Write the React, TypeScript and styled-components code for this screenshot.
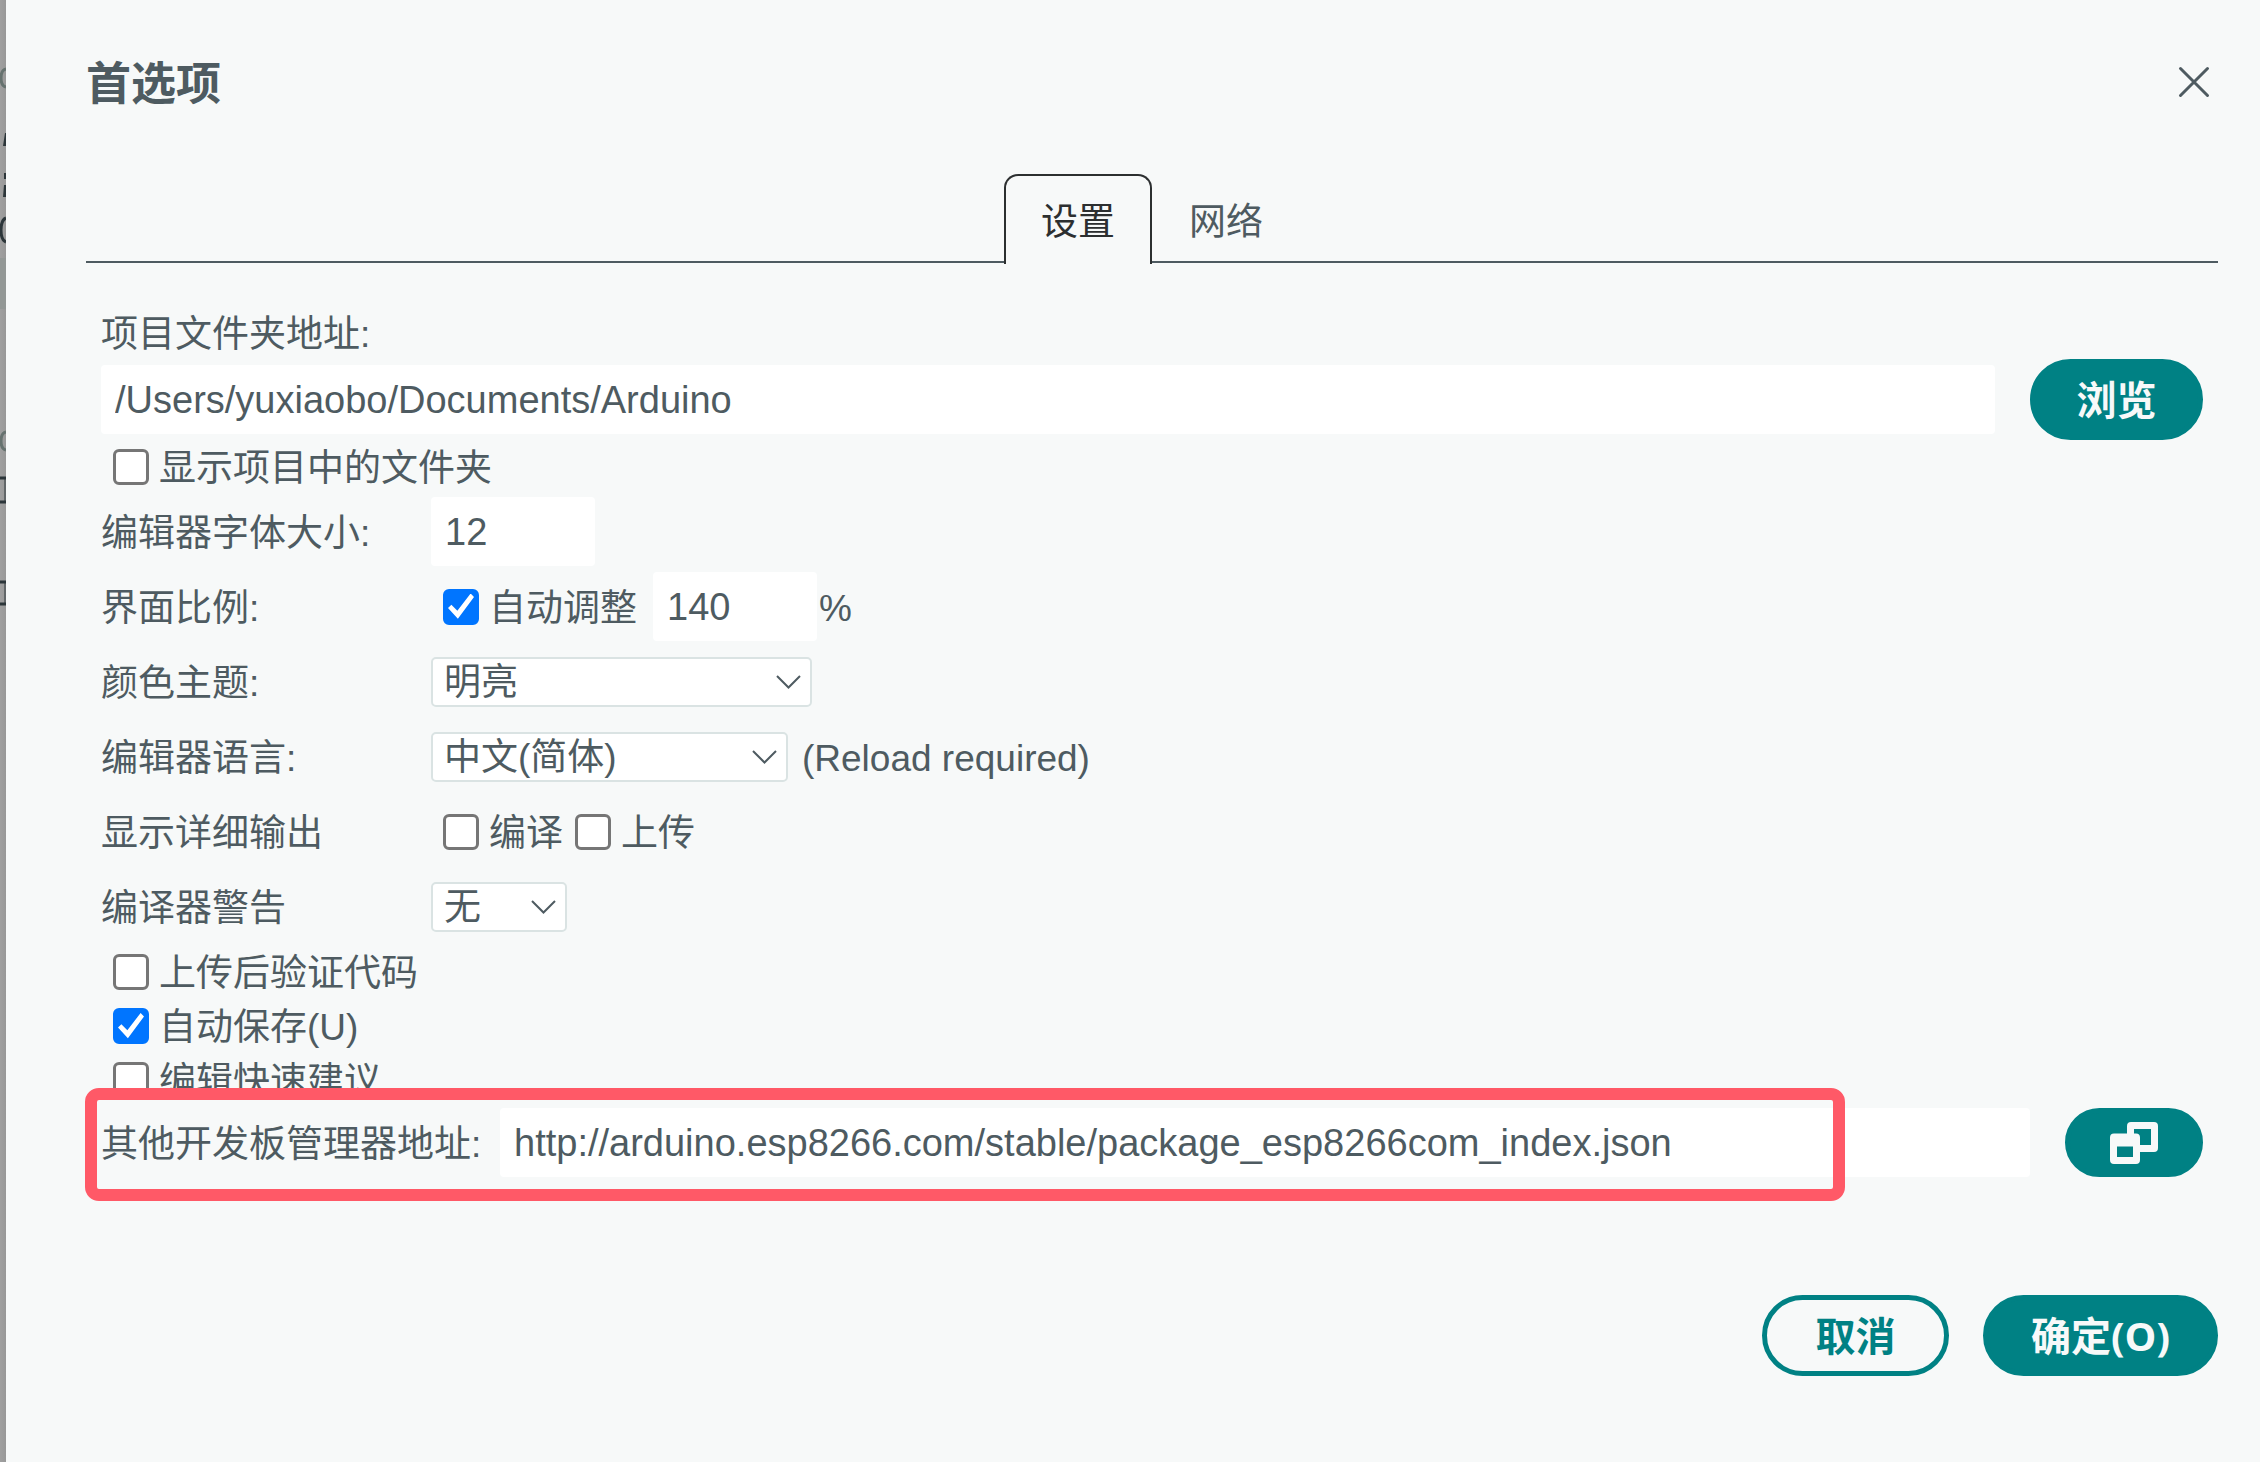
import React, { useState } from "react";
import styled, { createGlobalStyle } from "styled-components";

const ink = "#4e5b61";
const paper = "#f7f9f9";
const teal = "#008184";

const GlobalStyle = createGlobalStyle`
  *, *::before, *::after { box-sizing: border-box; }
  body {
    margin: 0;
    background: #9b9b9b;
    color: ${ink};
    font-family: "Liberation Sans", "Noto Sans CJK SC", sans-serif;
    font-size: 37px;
    line-height: 54px;
  }
  button, input, select { font: inherit; color: inherit; margin: 0; }
`;

const Page = styled.div`
  display: flex;
  min-height: 100vh;
`;

const Backdrop = styled.div`
  flex: none;
  width: 6px;
  overflow: hidden;
  background: linear-gradient(to right, #a0a0a0, #989898);
`;

const BackdropMarks = styled.svg`
  display: block;
`;

const Dialog = styled.main`
  flex: 1;
  min-width: 0;
  display: flex;
  flex-direction: column;
  padding: 48px 42px 86px 80px;
  background: ${paper};
`;

const Header = styled.header`
  display: flex;
  justify-content: space-between;
  align-items: center;
  height: 68px;
`;

const Title = styled.h1`
  margin: 0;
  padding-top: 6px;
  font-size: 45px;
  line-height: 68px;
  font-weight: 700;
`;

const CloseButton = styled.button`
  display: flex;
  padding: 8px;
  border: 0;
  background: none;
`;

const Tabs = styled.div`
  display: flex;
  justify-content: center;
  height: 90px;
  margin-top: 58px;
  background: linear-gradient(${ink}, ${ink}) 0 87px / 100% 2px no-repeat;
`;

const Tab = styled.button<{ $active: boolean }>`
  width: 148px;
  padding: 6px 0 0;
  border: 2px solid ${(p) => (p.$active ? "#2c2f30" : "transparent")};
  border-bottom: 0;
  border-radius: 14px 14px 0 0;
  background: ${(p) => (p.$active ? paper : "none")};
  color: ${(p) => (p.$active ? "#2c2f30" : ink)};
`;

const Content = styled.div`
  padding: 41px 15px 0;
`;

const Field = styled.div`
  display: flex;
  align-items: center;
  gap: 35px;
`;

const BlockLabel = styled.label`
  display: block;
  height: 54px;
  padding-top: 3px;
`;

const RowLabel = styled.label`
  padding-top: 4px;
`;

const TextInput = styled.input<{ $width?: number }>`
  ${(p) => (p.$width ? `flex: none; width: ${p.$width}px;` : "flex: 1; min-width: 0;")}
  height: 69px;
  padding: 2px 14px 0;
  border: 0;
  border-radius: 4px;
  background: #fff;
  font-size: 38px;
`;

const PillButton = styled.button<{ $outline?: boolean; $width: number; $height?: number }>`
  flex: none;
  display: flex;
  justify-content: center;
  align-items: center;
  width: ${(p) => p.$width}px;
  height: ${(p) => p.$height ?? 81}px;
  padding: 0;
  border: 5px solid ${teal};
  border-radius: 41px;
  background: ${(p) => (p.$outline ? "transparent" : teal)};
  color: ${(p) => (p.$outline ? teal : paper)};
  font-family: "Open Sans", "Noto Sans CJK SC", sans-serif;
  font-size: 40px;
  font-weight: 700;
  line-height: 52px;
`;

const CheckLabel = styled.label`
  display: flex;
  align-items: center;
  gap: 10px;
  height: 54px;
`;

const CheckText = styled.span`
  padding-top: 4px;
`;

const CheckBox = styled.input`
  appearance: none;
  flex: none;
  display: grid;
  place-items: center;
  width: 36px;
  height: 36px;
  border: 3px solid #767676;
  border-radius: 6px;
  background: #fff;

  &:checked {
    border-color: #0075ff;
    background: #0075ff;
  }

  &:checked::before {
    content: "";
    width: 26px;
    height: 26px;
    background: #fff;
    clip-path: polygon(0 56%, 13% 43%, 36% 66%, 87% 0, 100% 13%, 38% 97%);
  }
`;

const CheckList = styled.div`
  display: grid;
  padding: 4px 0 1px 12px;
`;

const Rows = styled.div`
  display: grid;
  grid-template-columns: 330px 1fr;
  grid-auto-rows: 69px;
  row-gap: 6px;
  align-items: center;
  margin-top: 3px;
`;

const Controls = styled.div<{ $gap: number; $inset?: boolean }>`
  display: flex;
  align-items: center;
  gap: ${(p) => p.$gap}px;
  padding-left: ${(p) => (p.$inset ? 12 : 0)}px;
`;

const SelectBox = styled.div<{ $width: number }>`
  position: relative;
  width: ${(p) => p.$width}px;
`;

const Select = styled.select`
  appearance: none;
  display: block;
  width: 100%;
  height: 50px;
  padding: 2px 11px 0;
  border: 2px solid #dae3e3;
  border-radius: 5px;
  background: #fff;
  line-height: 44px;
`;

const Chevron = styled.svg`
  position: absolute;
  right: 11px;
  top: 18px;
  pointer-events: none;
`;

const BoardUrls = styled.section`
  position: relative;
  margin: 0 15px;
`;

const UrlField = styled.div`
  display: flex;
  align-items: center;
`;

const UrlLabel = styled(RowLabel)`
  flex: none;
  width: 399px;
  white-space: nowrap;
`;

const UrlButton = styled(PillButton)`
  margin-left: 35px;
`;

const Highlight = styled.div`
  position: absolute;
  left: -16px;
  right: 358px;
  top: -20px;
  height: 113px;
  border: 12px solid #ff5967;
  border-radius: 14px;
  pointer-events: none;
`;

const Footer = styled.footer`
  display: flex;
  justify-content: flex-end;
  gap: 34px;
  margin-top: auto;
`;

function Check({ label, on = false }: { label: string; on?: boolean }) {
  return (
    <CheckLabel>
      <CheckBox type="checkbox" defaultChecked={on} />
      <CheckText>{label}</CheckText>
    </CheckLabel>
  );
}

function Dropdown({ id, width, options }: { id: string; width: number; options: string[] }) {
  return (
    <SelectBox $width={width}>
      <Select id={id}>
        {options.map((o) => (
          <option key={o}>{o}</option>
        ))}
      </Select>
      <Chevron width="25" height="14" viewBox="0 0 25 14" fill="none" stroke={ink} strokeWidth="2">
        <path d="M1 1 12.500 12.500 24 1" />
      </Chevron>
    </SelectBox>
  );
}

export default function App() {
  const [tab, setTab] = useState("设置");
  return (
    <Page>
      <GlobalStyle />
      <Backdrop>
        <BackdropMarks width="6" height="660" viewBox="0 0 6 660" fill="none" stroke="#2c363a" strokeWidth="3">
          <rect y="258" width="6" height="51" fill="#939896" stroke="none" />
          <path d="M6 69Q1 70 1 78T6 87M6 432Q1 433 1 441T6 450" stroke="#66726f" />
          <path d="M6 133V146H3L5 133ZM4 173H6V179H4ZM4 185H6V197H3Z" fill="#2c363a" stroke="none" />
          <path d="M6 218Q1 220 1 230T6 242" />
          <path d="M0 478H6M0 502H6M0 582H6M0 604H6" />
          <path d="M5 478V502M5 582V604" strokeWidth="1" />
        </BackdropMarks>
      </Backdrop>
      <Dialog>
        <Header>
          <Title>首选项</Title>
          <CloseButton aria-label="关闭">
            <svg width="32" height="32" viewBox="0 0 32 32" stroke={ink} strokeWidth="3" strokeLinecap="round">
              <path d="M2.500 2.500 29.500 29.500M29.500 2.500 2.500 29.500" />
            </svg>
          </CloseButton>
        </Header>
        <Tabs role="tablist">
          {["设置", "网络"].map((t) => (
            <Tab key={t} role="tab" aria-selected={tab === t} $active={tab === t} onClick={() => setTab(t)}>
              {t}
            </Tab>
          ))}
        </Tabs>
        <Content>
          <BlockLabel htmlFor="folder">项目文件夹地址:</BlockLabel>
          <Field>
            <TextInput id="folder" defaultValue="/Users/yuxiaobo/Documents/Arduino" />
            <PillButton $width={173}>浏览</PillButton>
          </Field>
          <Controls $gap={0} $inset>
            <Check label="显示项目中的文件夹" />
          </Controls>
          <Rows>
            <RowLabel htmlFor="font-size">编辑器字体大小:</RowLabel>
            <TextInput id="font-size" $width={164} defaultValue="12" />
            <RowLabel htmlFor="scale">界面比例:</RowLabel>
            <Controls $gap={16} $inset>
              <Check label="自动调整" on />
              <Controls $gap={2}>
                <TextInput id="scale" $width={164} defaultValue="140" />
                <CheckText>%</CheckText>
              </Controls>
            </Controls>
            <RowLabel htmlFor="theme">颜色主题:</RowLabel>
            <Dropdown id="theme" width={381} options={["明亮"]} />
            <RowLabel htmlFor="language">编辑器语言:</RowLabel>
            <Controls $gap={14}>
              <Dropdown id="language" width={357} options={["中文(简体)"]} />
              <CheckText>(Reload required)</CheckText>
            </Controls>
            <RowLabel as="span">显示详细输出</RowLabel>
            <Controls $gap={12} $inset>
              <Check label="编译" />
              <Check label="上传" />
            </Controls>
            <RowLabel htmlFor="warnings">编译器警告</RowLabel>
            <Dropdown id="warnings" width={136} options={["无"]} />
          </Rows>
          <CheckList>
            <Check label="上传后验证代码" />
            <Check label="自动保存(U)" on />
            <Check label="编辑快速建议" />
          </CheckList>
        </Content>
        <BoardUrls>
          <UrlField>
            <UrlLabel htmlFor="board-urls">其他开发板管理器地址:</UrlLabel>
            <TextInput id="board-urls" defaultValue="http://arduino.esp8266.com/stable/package_esp8266com_index.json" />
            <UrlButton $width={138} $height={69} aria-label="编辑地址">
              <svg width="48" height="42" viewBox="0 0 48 42" fill={paper} fillRule="evenodd">
                <path d="M21 0H44Q48 0 48 4V26Q48 30 44 30H30V23H41V7H24V12H17V4Q17 0 21 0Z" />
                <path d="M4 11.500H26Q30 11.500 30 15.500V38Q30 42 26 42H4Q0 42 0 38V15.500Q0 11.500 4 11.500ZM7 24.500V35H23V24.500Z" />
              </svg>
            </UrlButton>
          </UrlField>
          <Highlight />
        </BoardUrls>
        <Footer>
          <PillButton $outline $width={187}>取消</PillButton>
          <PillButton $width={235}>确定(O)</PillButton>
        </Footer>
      </Dialog>
    </Page>
  );
}
